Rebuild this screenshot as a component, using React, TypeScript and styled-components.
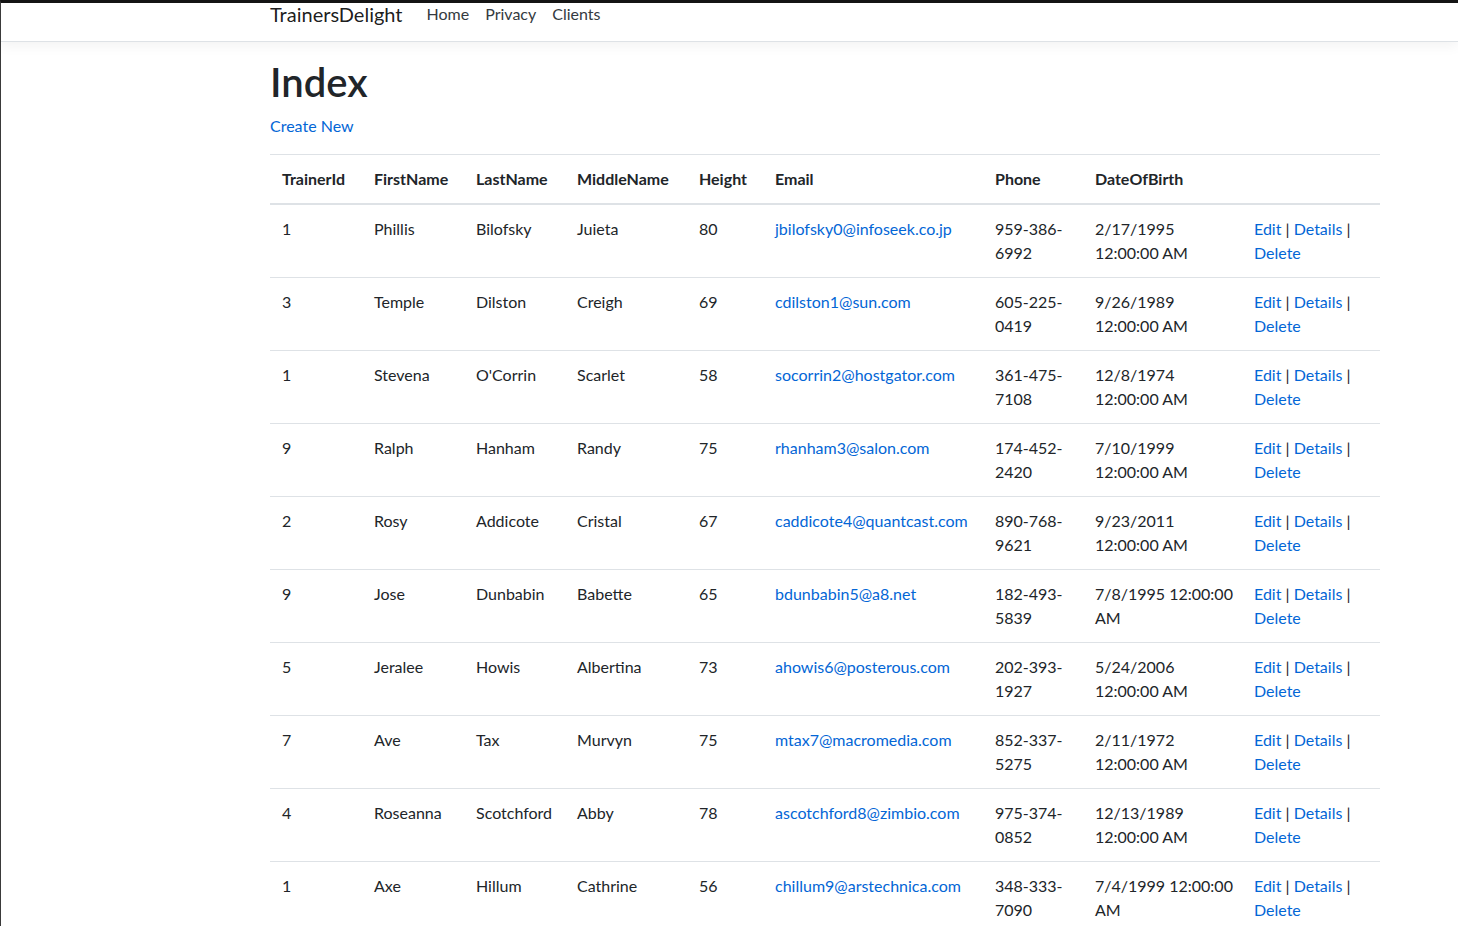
import React from "react";
import styled, { createGlobalStyle } from "styled-components";

const Global = createGlobalStyle`
  html, body { margin: 0; padding: 0; background: #fff; }
  body {
    font-family: "Segoe UI", "Lato", "Liberation Sans", sans-serif;
    font-size: 16px;
    line-height: 1.5;
    color: #212529;
  }
  * { box-sizing: border-box; }
`;

const Frame = styled.div`
  min-height: 926px;
  border-top: 3px solid #141414;
  border-left: 1px solid #3a3a3a;
  overflow: hidden;
`;

const NavBar = styled.header`
  height: 39px;
  background: #fff;
  border-bottom: 1px solid #dee2e6;
  box-shadow: 0 4px 12px rgba(0, 0, 0, 0.05);
  margin-bottom: 16px;
  padding-bottom: 16px;
`;

const Container = styled.div`
  width: 1110px;
  margin-left: 269px;
`;

const NavInner = styled(Container)`
  display: flex;
  align-items: center;
  height: 100%;
`;

const Brand = styled.a`
  font-size: 20px;
  color: rgba(0, 0, 0, 0.9);
  text-decoration: none;
  margin-right: 16px;
  line-height: 30px;
`;

const NavLink = styled.a`
  color: #343a40;
  text-decoration: none;
  padding: 0 8px;
  font-size: 16px;
`;

const Title = styled.h1`
  font-size: 40px;
  font-weight: 600;
  line-height: 1.2;
  margin: 0 0 8px;
  color: #212529;
`;

const Link = styled.a`
  color: #0366d6;
  text-decoration: none;
`;

const CreateP = styled.p`
  margin: 0 0 16px;
`;

const Table = styled.table`
  width: 1110px;
  border-collapse: collapse;
  table-layout: fixed;
  color: #212529;
`;

const Col = styled.col<{ $w: number }>`
  width: ${(p) => p.$w}px;
`;

const Th = styled.th`
  text-align: left;
  font-weight: 700;
  padding: 12px;
  vertical-align: bottom;
  border-top: 1px solid #dee2e6;
  border-bottom: 2px solid #dee2e6;
`;

const Td = styled.td<{ $tight?: boolean }>`
  padding: 12px;
  padding-right: ${(p) => (p.$tight ? 4 : 12)}px;
  vertical-align: top;
  border-top: 1px solid #dee2e6;
`;

const Sep = styled.span`
  color: #212529;
`;

const cols = [92, 102, 101, 122, 76, 220, 100, 159, 138];
const heads = ["TrainerId", "FirstName", "LastName", "MiddleName", "Height", "Email", "Phone", "DateOfBirth", ""];

const rows = [
  ["1", "Phillis", "Bilofsky", "Juieta", "80", "jbilofsky0@infoseek.co.jp", "959-386-6992", "2/17/1995 12:00:00 AM"],
  ["3", "Temple", "Dilston", "Creigh", "69", "cdilston1@sun.com", "605-225-0419", "9/26/1989 12:00:00 AM"],
  ["1", "Stevena", "O'Corrin", "Scarlet", "58", "socorrin2@hostgator.com", "361-475-7108", "12/8/1974 12:00:00 AM"],
  ["9", "Ralph", "Hanham", "Randy", "75", "rhanham3@salon.com", "174-452-2420", "7/10/1999 12:00:00 AM"],
  ["2", "Rosy", "Addicote", "Cristal", "67", "caddicote4@quantcast.com", "890-768-9621", "9/23/2011 12:00:00 AM"],
  ["9", "Jose", "Dunbabin", "Babette", "65", "bdunbabin5@a8.net", "182-493-5839", "7/8/1995 12:00:00 AM"],
  ["5", "Jeralee", "Howis", "Albertina", "73", "ahowis6@posterous.com", "202-393-1927", "5/24/2006 12:00:00 AM"],
  ["7", "Ave", "Tax", "Murvyn", "75", "mtax7@macromedia.com", "852-337-5275", "2/11/1972 12:00:00 AM"],
  ["4", "Roseanna", "Scotchford", "Abby", "78", "ascotchford8@zimbio.com", "975-374-0852", "12/13/1989 12:00:00 AM"],
  ["1", "Axe", "Hillum", "Cathrine", "56", "chillum9@arstechnica.com", "348-333-7090", "7/4/1999 12:00:00 AM"],
];

export default function App() {
  return (
    <Frame>
      <Global />
      <NavBar>
        <NavInner>
          <Brand href="#">TrainersDelight</Brand>
          <NavLink href="#">Home</NavLink>
          <NavLink href="#">Privacy</NavLink>
          <NavLink href="#">Clients</NavLink>
        </NavInner>
      </NavBar>
      <Container>
        <Title>Index</Title>
        <CreateP>
          <Link href="#">Create New</Link>
        </CreateP>
        <Table>
          <colgroup>
            {cols.map((w, i) => (
              <Col key={i} $w={w} />
            ))}
          </colgroup>
          <thead>
            <tr>
              {heads.map((h, i) => (
                <Th key={i}>{h}</Th>
              ))}
            </tr>
          </thead>
          <tbody>
            {rows.map((r, i) => (
              <tr key={i}>
                {r.map((c, j) => (
                  <Td key={j} $tight={j === 7}>
                    {j === 5 ? <Link href="#">{c}</Link> : c}
                  </Td>
                ))}
                <Td>
                  <Link href="#">Edit</Link> <Sep>|</Sep> <Link href="#">Details</Link> <Sep>|</Sep>{" "}
                  <Link href="#">Delete</Link>
                </Td>
              </tr>
            ))}
          </tbody>
        </Table>
      </Container>
    </Frame>
  );
}
